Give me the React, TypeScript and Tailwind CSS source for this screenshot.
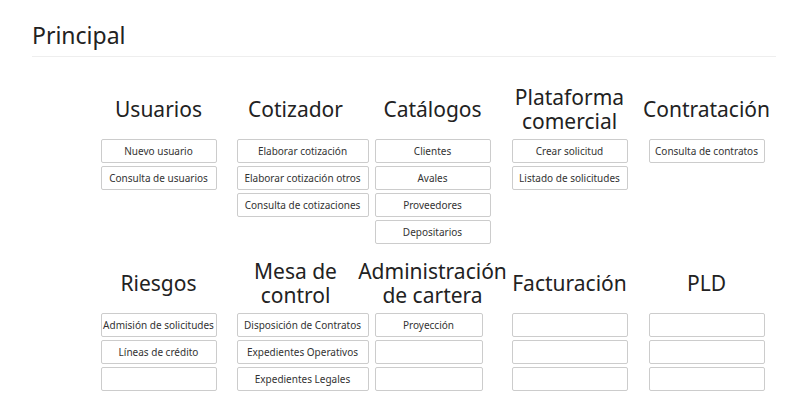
const rows: { t: string[]; items: string[]; w: string }[][] = [
  [
    { t: ["Usuarios"], items: ["Nuevo usuario", "Consulta de usuarios"], w: "w-[116px]" },
    { t: ["Cotizador"], items: ["Elaborar cotización", "Elaborar cotización otros", "Consulta de cotizaciones"], w: "w-[132px] ml-[14px]" },
    { t: ["Catálogos"], items: ["Clientes", "Avales", "Proveedores", "Depositarios"], w: "w-[116px]" },
    { t: ["Plataforma", "comercial"], items: ["Crear solicitud", "Listado de solicitudes"], w: "w-[116px]" },
    { t: ["Contratación"], items: ["Consulta de contratos"], w: "w-[116px]" },
  ],
  [
    { t: ["Riesgos"], items: ["Admisión de solicitudes", "Líneas de crédito", ""], w: "w-[116px]" },
    { t: ["Mesa de", "control"], items: ["Disposición de Contratos", "Expedientes Operativos", "Expedientes Legales"], w: "w-[132px] ml-[14px]" },
    { t: ["Administración", "de cartera"], items: ["Proyección", "", ""], w: "w-[108px] mr-[8px]" },
    { t: ["Facturación"], items: ["", "", ""], w: "w-[116px]" },
    { t: ["PLD"], items: ["", "", ""], w: "w-[116px]" },
  ],
];

export default function App() {
  return (
    <div className="w-[812px] h-[409px] bg-white overflow-hidden text-[#222] font-['Liberation_Sans',Arial,sans-serif]">
      <div className="mx-[32px] w-[744px]">
        <div className="pt-[22px] pb-[8px] border-b border-[#eee] text-[23px] leading-[26px]">Principal</div>
        <div className="ml-[58px] w-[685px] mt-[28px] flex flex-col gap-[15px]">
          {rows.map((r, i) => (
            <div key={i} className="grid grid-cols-5">
              {r.map((c) => (
                <div key={c.t.join()} className="flex flex-col items-center">
                  <div className="h-[48px] flex flex-col justify-center items-center text-[21px] leading-[24px] whitespace-nowrap">
                    {c.t.map((l) => <div key={l}>{l}</div>)}
                  </div>
                  <div className={"mt-[6px] flex flex-col gap-[3px] " + (c.w.includes("ml-") ? "ml-[14px]" : c.w.includes("mr-") ? "mr-[8px]" : "")}>
                    {c.items.map((it, k) => (
                      <div key={k} className={(c.w.startsWith("w-[132px]") ? "w-[132px]" : c.w.startsWith("w-[108px]") ? "w-[108px]" : "w-[116px]") + " h-[24px] border border-[#ccc] rounded-[2px] flex items-center justify-center text-[10px] text-[#333] whitespace-nowrap"}>{it}</div>
                    ))}
                  </div>
                </div>
              ))}
            </div>
          ))}
        </div>
      </div>
    </div>
  );
}
